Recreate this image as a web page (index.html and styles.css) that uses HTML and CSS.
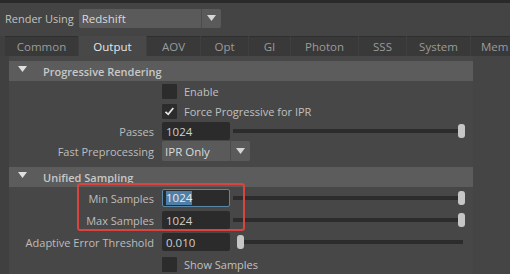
FILE: index.html
```html
<!DOCTYPE html>
<html>
<head>
<meta charset="utf-8">
<link rel="stylesheet" href="styles.css">
</head>
<body>
<div class="topstrip"></div>
<div class="renderbar">
  <span class="rb-label">Render Using</span>
  <div class="dropdown dd-render">
    <span class="dd-text">Redshift</span>
    <span class="dd-arrow"><svg width="9" height="6" viewBox="0 0 9 6"><path d="M0 0H9L4.5 6Z" fill="#d6d6d6"/></svg></span>
  </div>
</div>
<div class="tabs">
  <div class="tab t-common">Common</div>
  <div class="tab active t-output">Output</div>
  <div class="tab t-aov">AOV</div>
  <div class="tab t-opt">Opt</div>
  <div class="tab t-gi">GI</div>
  <div class="tab t-photon">Photon</div>
  <div class="tab t-sss">SSS</div>
  <div class="tab t-system">System</div>
  <div class="tab t-mem">Mem</div>
</div>
<div class="content">
  <div class="gutter"></div>
  <div class="main">
    <div class="frame-head"><svg class="tri" width="9" height="6" viewBox="0 0 9 6"><path d="M0 0H9L4.5 6Z" fill="#e0e0e0"/></svg><span>Progressive Rendering</span></div>
    <div class="section s1">
      <div class="row"><span class="lbl"></span><span class="cb"></span><span class="cb-text">Enable</span></div>
      <div class="row"><span class="lbl"></span><span class="cb"><svg width="15" height="15" viewBox="0 0 15 15"><path d="M3.5 7.8L6.2 10.3L11.3 4" fill="none" stroke="#e6e6e6" stroke-width="1.8"/></svg></span><span class="cb-text">Force Progressive for IPR</span></div>
      <div class="row"><span class="lbl">Passes</span><span class="field">1024</span><div class="slider"><div class="track"></div><div class="handle"></div></div></div>
      <div class="row"><span class="lbl">Fast Preprocessing</span>
        <div class="dropdown dd-small"><span class="dd-text">IPR Only</span><span class="dd-arrow"><svg width="9" height="6" viewBox="0 0 9 6"><path d="M0 0H9L4.5 6Z" fill="#d6d6d6"/></svg></span></div>
      </div>
    </div>
    <div class="frame-head fh2"><svg class="tri" width="9" height="6" viewBox="0 0 9 6"><path d="M0 0H9L4.5 6Z" fill="#e0e0e0"/></svg><span>Unified Sampling</span></div>
    <div class="section s2">
      <div class="row"><span class="lbl">Min Samples</span><span class="field focus"><span class="sel">1024</span></span><div class="slider"><div class="track"></div><div class="handle"></div></div></div>
      <div class="row"><span class="lbl">Max Samples</span><span class="field">1024</span><div class="slider"><div class="track"></div><div class="handle"></div></div></div>
      <div class="row"><span class="lbl">Adaptive Error Threshold</span><span class="field">0.010</span><div class="slider left"><div class="handle"></div><div class="track"></div></div></div>
      <div class="row"><span class="lbl"></span><span class="cb"></span><span class="cb-text">Show Samples</span></div>
      <div class="highlight"></div>
    </div>
  </div>
  <div class="scrollarea"></div>
</div>
</body>
</html>
```
FILE: styles.css
```css
html, body {
  margin: 0;
  padding: 0;
  background: #444444;
  width: 510px;
  height: 274px;
  overflow: hidden;
  font-family: "Open Sans", "Noto Sans", sans-serif;
  font-size: 11px;
  color: #bdbdbd;
}
.topstrip {
  height: 3px;
  background: #2a2a2a;
}
.renderbar {
  height: 33px;
  display: flex;
  align-items: center;
  padding-left: 5px;
  gap: 5px;
  box-sizing: border-box;
  padding-bottom: 3px;
}
.rb-label {
  color: #c2c2c2;
  font-size: 11px;
}
.dropdown {
  display: flex;
  align-items: stretch;
  background: #5a5a5a;
  border-radius: 2px;
  color: #dadada;
  box-sizing: border-box;
}
.dd-render {
  width: 142px;
  height: 19px;
  font-size: 11.5px;
}
.dd-small {
  width: 88px;
  height: 20px;
  font-size: 11.5px;
}
.dd-text {
  flex: 1;
  padding-left: 3px;
  display: flex;
  align-items: center;
  border-right: 1px solid #4c4c4c;
}
.dd-arrow {
  width: 19px;
  display: flex;
  align-items: center;
  justify-content: center;
}
.tabs {
  height: 20px;
  display: flex;
  padding-left: 5px;
  gap: 1px;
  background: #3f3f3f;
}
.tab {
  background: #393939;
  color: #9b9b9b;
  font-size: 11.5px;
  display: flex;
  align-items: center;
  justify-content: center;
  border-top: 1px solid #2f2f2f;
  box-sizing: border-box;
  flex: none;
}
.tab.active {
  background: #484848;
  color: #e6e6e6;
  border-top-color: #484848;
}
.t-common { width: 73px; }
.t-output { width: 67px; }
.t-aov { width: 53px; }
.t-opt { width: 47px; }
.t-gi { width: 41px; }
.t-photon { width: 67px; }
.t-sss { width: 47px; }
.t-system { width: 63px; }
.t-mem { width: 40px; justify-content: flex-start; padding-left: 10px; }
.content {
  display: flex;
  height: 218px;
}
.gutter {
  width: 9px;
  background: #404040;
  flex: none;
}
.main {
  width: 464px;
  flex: none;
  padding-top: 5px;
  background: #474747;
}
.scrollarea {
  flex: 1;
  background: #454545;
}
.frame-head {
  height: 20px;
  background: #5c5c5c;
  display: flex;
  align-items: center;
  font-weight: 600;
  color: #c8c8c8;
  font-size: 11px;
}
.frame-head .tri {
  margin-left: 9px;
  margin-right: 16px;
  margin-top: -4px;
}
.fh2 { margin-top: 6px; }
.section { position: relative; }
.row {
  display: flex;
  align-items: center;
}
.s1 .row { height: 20px; }
.s2 .row { height: 22px; }
.lbl {
  width: 145px;
  text-align: right;
  margin-right: 8px;
  flex: none;
  color: #bdbdbd;
}
.cb {
  width: 15px;
  height: 15px;
  background: #2c2c2c;
  border-radius: 1px;
  flex: none;
  display: block;
}
.cb svg { display: block; }
.cb-text {
  margin-left: 7px;
  color: #c0c0c0;
}
.field {
  width: 68px;
  height: 18px;
  background: #2b2b2b;
  border-radius: 2px;
  color: #cfcfcf;
  display: flex;
  align-items: center;
  padding-left: 4px;
  box-sizing: border-box;
  flex: none;
  font-size: 11.5px;
}
.field.focus {
  border: 1px solid #5b87a6;
  padding-left: 3px;
}
.sel {
  background: #4f7fa6;
  color: #eaeaea;
  line-height: 14px;
}
.slider {
  width: 232px;
  margin-left: 3px;
  height: 16px;
  display: flex;
  align-items: center;
}
.track {
  flex: 1;
  height: 4px;
  background: #2c2c2c;
}
.handle {
  width: 7px;
  height: 14px;
  border-radius: 3px;
  background: #c6c6c6;
  flex: none;
}
.slider.left { margin-left: 7px; width: 226px; }
.highlight {
  position: absolute;
  left: 68px;
  top: -4px;
  width: 168px;
  height: 48px;
  border: 2px solid #d9443e;
  border-radius: 3px;
  box-sizing: border-box;
}
```
